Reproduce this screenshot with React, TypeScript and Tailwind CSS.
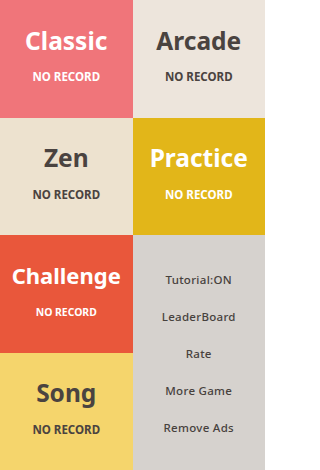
import React from "react";

type Cell = {
  title: string;
  bg: string;
  text: string;
  small?: boolean;
};

function ModeCell({ title, bg, text, small }: Cell) {
  return (
    <div className={`flex flex-col items-center ${bg} ${text} ${small ? "pt-[29px]" : "pt-[28.7px]"}`}>
      <div className={`font-bold leading-none ${small ? "text-[22px]" : "text-[24.5px]"}`}>{title}</div>
      <div className={`font-bold leading-none ${small ? "mt-[20.5px] text-[10.4px]" : "mt-[18px] text-[11.5px]"}`}>NO RECORD</div>
    </div>
  );
}

export default function App() {
  const menu = ["Tutorial:ON", "LeaderBoard", "Rate", "More Game", "Remove Ads"];
  return (
    <div
      className="grid h-[470px] w-[265px] grid-cols-2 grid-rows-4 overflow-hidden"
      style={{ fontFamily: '"Noto Sans", "Open Sans", sans-serif' }}
    >
      <ModeCell title="Classic" bg="bg-[#f0757a]" text="text-white" />
      <ModeCell title="Arcade" bg="bg-[#ede5dc]" text="text-[#4a4340]" />
      <ModeCell title="Zen" bg="bg-[#ede2cf]" text="text-[#4a4340]" />
      <ModeCell title="Practice" bg="bg-[#e2b619]" text="text-white" />
      <ModeCell title="Challenge" bg="bg-[#e9573b]" text="text-white" small />
      <div className="row-span-2 flex flex-col items-center gap-[25.6px] bg-[#d6d2ce] pt-[38.7px] text-[#47413d]">
        {menu.map((m) => (
          <div key={m} className="text-[11.5px] font-medium leading-none tracking-[0.3px]">
            {m}
          </div>
        ))}
      </div>
      <ModeCell title="Song" bg="bg-[#f5d56c]" text="text-[#4a4340]" />
    </div>
  );
}
